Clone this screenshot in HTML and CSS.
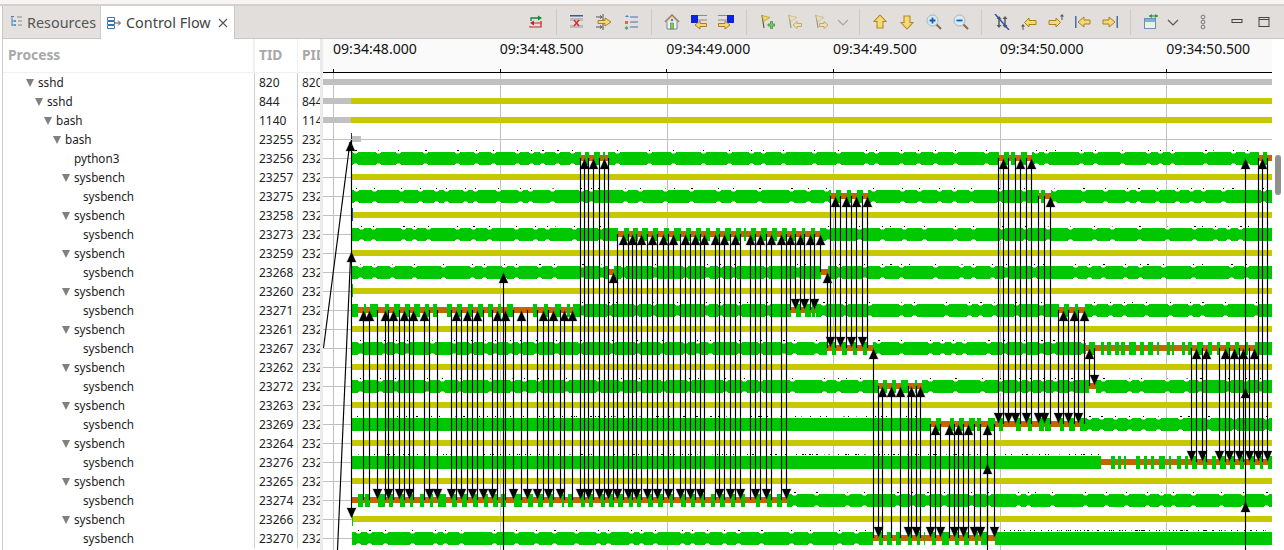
FILE: index.html
```html
<!DOCTYPE html>
<html lang="en">
<head>
<meta charset="utf-8">
<title>Control Flow</title>
<link rel="stylesheet" href="styles.css">
</head>
<body>
<div class="window">
  <div class="topstrip"></div>
  <div class="tabbar">
    <div class="tab">
      <svg class="ico" viewBox="0 0 16 16"><path d="M3 2.500h3M4 3v9M4 7h2M4 11h2" fill="none" stroke="#5b7fa6"/><rect x="6" y="6" width="2" height="2" fill="#5b9bd1"/><rect x="6" y="10" width="2" height="2" fill="#5b9bd1"/><path d="M9 3h5M10 7h4M10 11h4" stroke="#8a8a8a" fill="none"/></svg>
      <span>Resources</span>
    </div>
    <div class="tab active">
      <svg class="ico" viewBox="0 0 16 16"><path d="M1.500 2.500h7v3h-7zM1.500 6.500h7v3h-7zM1.500 10.500h7v3h-7z" fill="none" stroke="#3a76ad"/><path d="M8.500 8h5.500M12 5.500l2.500 2.500-2.500 2.500" fill="none" stroke="#555"/></svg>
      <span>Control Flow</span>
      <svg class="close" viewBox="0 0 10 10"><path d="M1 1l8 8M9 1l-8 8" stroke="#555" stroke-width="1.100"/></svg>
    </div>
    <div class="toolbar">
      <button class="tb"><svg viewBox="0 0 16 16"><path d="M3 7V4h8" fill="none" stroke="#0a8a3a" stroke-width="1.300"/><path d="M10 1.500l4 2.500-4 2.500z" fill="#0a8a3a"/><path d="M13 7v6H2v-1" fill="none" stroke="#d12020" stroke-width="1.200"/><path d="M14 9H5" stroke="#c0504d" stroke-width="1.200"/><path d="M6 6.500L2 9l4 2.500z" fill="#d12020"/></svg></button>
      <i class="sep"></i>
      <button class="tb"><svg viewBox="0 0 16 16"><rect x="1" y="1" width="13" height="1.500" fill="#3d50c0"/><rect x="1" y="4" width="13" height="3" fill="#bdbbb8"/><rect x="1" y="11" width="13" height="3" fill="#bdbbb8"/><path d="M5 6l5 6M10 6l-5 6" stroke="#e02020" stroke-width="1.300"/></svg></button>
      <button class="tb"><svg viewBox="0 0 16 16"><path d="M0 3h5M4 1.500L6 3 4 4.500M0 13h5M4 11.500L6 13l-2 1.500" fill="none" stroke="#555"/><path d="M7 0v6M7 10v6" stroke="#555"/><path d="M2 6.500h7V4l6 4-6 4V9.500H2z" fill="#f6d878" stroke="#a9811c"/></svg></button>
      <button class="tb"><svg viewBox="0 0 16 16"><path d="M2 3l2-2 2 2z" fill="#4a7cc0"/><rect x="2" y="7" width="3" height="3" fill="#e0605a"/><path d="M3.500 12l2 2-2 2-2-2z" fill="#50a878"/><path d="M7 3h8M7 8h8M7 13h8" stroke="#4a6fa5" stroke-width="1.200"/></svg></button>
      <i class="sep"></i>
      <button class="tb"><svg viewBox="0 0 16 16"><path d="M3 7.500V15h10V7.500" fill="#eef2f5" stroke="#6b8aa5"/><path d="M1 8l7-7 7 7" fill="none" stroke="#a2784f" stroke-width="1.500"/><rect x="6.500" y="9" width="3" height="6" fill="#8ec15a" stroke="#4d8a2a" stroke-width=".6"/><rect x="7" y="5" width="2" height="2" fill="#3d7fc0"/></svg></button>
      <button class="tb"><svg viewBox="0 0 16 16"><rect x="0" y="1" width="7" height="8" fill="#0b22e0"/><path d="M7 1.500h9M7 6h9" stroke="#8a8a8a"/><path d="M15.500 9.500H9V7L4 11l5 4v-2.500h6.500z" fill="#f7d878" stroke="#a9811c"/></svg></button>
      <button class="tb"><svg viewBox="0 0 16 16"><rect x="9" y="1" width="7" height="8" fill="#0b22e0"/><path d="M0 1.500h9M0 6h9" stroke="#8a8a8a"/><path d="M.5 9.500H7V7l5 4-5 4v-2.500H.5z" fill="#f7d878" stroke="#a9811c"/></svg></button>
      <i class="sep"></i>
      <button class="tb"><svg viewBox="0 0 16 16"><path d="M3 1l2 13" stroke="#6b5a30" stroke-width="1.200"/><path d="M3 1.500l8 2-6.500 4z" fill="#f0d860" stroke="#b09a30" stroke-width=".7"/><path d="M9 10h2.500V7.500h2V10H16v2h-2.500v2.500h-2V12H9z" fill="#7cc86a" stroke="#3d8a30" stroke-width=".7"/></svg></button>
      <button class="tb"><svg viewBox="0 0 16 16" opacity=".75"><path d="M3 1l2 13" stroke="#8a7f60" stroke-width="1.200"/><path d="M3 1.500l8 2-6.500 4z" fill="#efe3a8" stroke="#b8ab70" stroke-width=".7"/><path d="M15.500 9.500H11V7.500L7 11l4 3.500v-2h4.500z" fill="#f4e2a0" stroke="#b09a50"/></svg></button>
      <button class="tb"><svg viewBox="0 0 16 16" opacity=".75"><path d="M3 1l2 13" stroke="#8a7f60" stroke-width="1.200"/><path d="M3 1.500l8 2-6.500 4z" fill="#efe3a8" stroke="#b8ab70" stroke-width=".7"/><path d="M6.500 9.500H11V7.500l4 3.500-4 3.500v-2H6.500z" fill="#f4e2a0" stroke="#b09a50"/></svg></button>
      <button class="tb chev dim"><svg viewBox="0 0 16 16"><path d="M3 6l5 5 5-5" fill="none" stroke="#a8a6a3" stroke-width="1.200"/></svg></button>
      <i class="sep"></i>
      <button class="tb"><svg viewBox="0 0 16 16"><path d="M8 1l6 6.500h-3V14H5V7.500H2z" fill="#f7d878" stroke="#b08a20" stroke-width="1.100"/></svg></button>
      <button class="tb"><svg viewBox="0 0 16 16"><path d="M8 15L2 8.500h3V2h6v6.500h3z" fill="#f7d878" stroke="#b08a20" stroke-width="1.100"/></svg></button>
      <button class="tb"><svg viewBox="0 0 16 16"><path d="M10 10l5 5" stroke="#8a6a4a" stroke-width="2"/><circle cx="6.500" cy="6.500" r="5.500" fill="#dfe9f2" stroke="#9fb4c6"/><path d="M3.500 6.500h6M6.500 3.500v6" stroke="#0a62b0" stroke-width="1.800"/></svg></button>
      <button class="tb"><svg viewBox="0 0 16 16"><path d="M10 10l5 5" stroke="#8a6a4a" stroke-width="2"/><circle cx="6.500" cy="6.500" r="5.500" fill="#dfe9f2" stroke="#9fb4c6"/><path d="M3.500 6.500h6" stroke="#0a62b0" stroke-width="1.800"/></svg></button>
      <i class="sep"></i>
      <button class="tb"><svg viewBox="0 0 16 16"><path d="M5 2l-2.500 3h5zM11 14l-2.500-3h5zM11 2L8.500 5h5zM5 14l-2.500-3h5z" fill="#5a5a5a"/><path d="M5 4v8M11 4v8" stroke="#5a5a5a" stroke-width="1.500"/><path d="M1 0l14 16" stroke="#2a4fa8" stroke-width="1.400"/></svg></button>
      <button class="tb"><svg viewBox="0 0 16 16"><path d="M8 6.500h7v4H8V13L3.500 8.500 8 4z" fill="#f7d878" stroke="#a9811c"/><path d="M2 11v5" stroke="#555"/><path d="M0 12.500L2 10l2 2.500z" fill="#555"/></svg></button>
      <button class="tb"><svg viewBox="0 0 16 16"><path d="M8 6.500H1v4h7V13l4.500-4.500L8 4z" fill="#f7d878" stroke="#a9811c"/><path d="M14 1v5" stroke="#555"/><path d="M12 2.500L14 0l2 2.500z" fill="#555"/></svg></button>
      <button class="tb"><svg viewBox="0 0 16 16"><rect x="0" y="2" width="1.500" height="12" fill="#4a6fa5"/><path d="M9 6h6v4H9v3L3 8l6-5z" fill="#f7d878" stroke="#a9811c"/></svg></button>
      <button class="tb"><svg viewBox="0 0 16 16"><rect x="14.500" y="2" width="1.500" height="12" fill="#4a6fa5"/><path d="M7 6H1v4h6v3l6-5-6-5z" fill="#f7d878" stroke="#a9811c"/></svg></button>
      <i class="sep"></i>
      <button class="tb"><svg viewBox="0 0 16 16"><rect x="1.500" y="4.500" width="11" height="10" fill="#fff" stroke="#6b8fb5"/><rect x="2" y="5" width="10" height="3" fill="#7fb0dc"/><rect x="2" y="8" width="10" height="6" fill="#eaf2e0"/><path d="M6 2h9" stroke="#2a9a3a" stroke-width="1.200"/><path d="M9 0L6 2l3 2zM12 0l3 2-3 2z" fill="#2a9a3a"/></svg></button>
      <button class="tb chev"><svg viewBox="0 0 16 16"><path d="M3 6l5 5 5-5" fill="none" stroke="#555" stroke-width="1.200"/></svg></button>
      <button class="tb dots"><svg viewBox="0 0 16 16"><circle cx="8" cy="3" r="1.900" fill="none" stroke="#777"/><circle cx="8" cy="8" r="1.900" fill="none" stroke="#777"/><circle cx="8" cy="13" r="1.900" fill="none" stroke="#777"/></svg></button>
      <button class="tb mini"><svg viewBox="0 0 16 16"><rect x="3" y="5.500" width="10" height="3" fill="none" stroke="#444"/></svg></button>
      <button class="tb"><svg viewBox="0 0 16 16"><rect x="3" y="3.500" width="10" height="9" fill="none" stroke="#444"/><path d="M3 5.500h10" stroke="#444"/></svg></button>
    </div>
  </div>
  <div class="content">
    <div class="table">
      <div class="row head"><div class="c name">Process</div><div class="c tid">TID</div><div class="c pid">PID</div></div>
      <div class="row"><div class="c name d0 tw">sshd</div><div class="c tid">820</div><div class="c pid">820</div></div>
      <div class="row"><div class="c name d1 tw">sshd</div><div class="c tid">844</div><div class="c pid">844</div></div>
      <div class="row"><div class="c name d2 tw">bash</div><div class="c tid">1140</div><div class="c pid">1140</div></div>
      <div class="row"><div class="c name d3 tw">bash</div><div class="c tid">23255</div><div class="c pid">23255</div></div>
      <div class="row"><div class="c name d4">python3</div><div class="c tid">23256</div><div class="c pid">23256</div></div>
      <div class="row"><div class="c name d4 tw">sysbench</div><div class="c tid">23257</div><div class="c pid">23257</div></div>
      <div class="row"><div class="c name d5">sysbench</div><div class="c tid">23275</div><div class="c pid">23257</div></div>
      <div class="row"><div class="c name d4 tw">sysbench</div><div class="c tid">23258</div><div class="c pid">23258</div></div>
      <div class="row"><div class="c name d5">sysbench</div><div class="c tid">23273</div><div class="c pid">23258</div></div>
      <div class="row"><div class="c name d4 tw">sysbench</div><div class="c tid">23259</div><div class="c pid">23259</div></div>
      <div class="row"><div class="c name d5">sysbench</div><div class="c tid">23268</div><div class="c pid">23259</div></div>
      <div class="row"><div class="c name d4 tw">sysbench</div><div class="c tid">23260</div><div class="c pid">23260</div></div>
      <div class="row"><div class="c name d5">sysbench</div><div class="c tid">23271</div><div class="c pid">23260</div></div>
      <div class="row"><div class="c name d4 tw">sysbench</div><div class="c tid">23261</div><div class="c pid">23261</div></div>
      <div class="row"><div class="c name d5">sysbench</div><div class="c tid">23267</div><div class="c pid">23261</div></div>
      <div class="row"><div class="c name d4 tw">sysbench</div><div class="c tid">23262</div><div class="c pid">23262</div></div>
      <div class="row"><div class="c name d5">sysbench</div><div class="c tid">23272</div><div class="c pid">23262</div></div>
      <div class="row"><div class="c name d4 tw">sysbench</div><div class="c tid">23263</div><div class="c pid">23263</div></div>
      <div class="row"><div class="c name d5">sysbench</div><div class="c tid">23269</div><div class="c pid">23263</div></div>
      <div class="row"><div class="c name d4 tw">sysbench</div><div class="c tid">23264</div><div class="c pid">23264</div></div>
      <div class="row"><div class="c name d5">sysbench</div><div class="c tid">23276</div><div class="c pid">23264</div></div>
      <div class="row"><div class="c name d4 tw">sysbench</div><div class="c tid">23265</div><div class="c pid">23265</div></div>
      <div class="row"><div class="c name d5">sysbench</div><div class="c tid">23274</div><div class="c pid">23265</div></div>
      <div class="row"><div class="c name d4 tw">sysbench</div><div class="c tid">23266</div><div class="c pid">23266</div></div>
      <div class="row"><div class="c name d5">sysbench</div><div class="c tid">23270</div><div class="c pid">23266</div></div>
    </div>
    <div class="sash"></div>
    <div class="chart">
      <div class="scale">
        <div class="mark">09:34:48.000</div>
        <div class="mark">09:34:48.500</div>
        <div class="mark">09:34:49.000</div>
        <div class="mark">09:34:49.500</div>
        <div class="mark">09:34:50.000</div>
        <div class="mark">09:34:50.500</div>
      </div>
      <div class="plot" id="plot"></div>
    </div>
    <div class="vscroll"><div class="thumb"></div></div>
  </div>
</div>
<script src="timeline.js"></script>
</body>
</html>
```
FILE: styles.css
```css
* { box-sizing: border-box; }
html, body { margin: 0; height: 100%; background: #fff; overflow: hidden; }
body { font-family: "Noto Sans", "Open Sans", sans-serif; font-size: 12px; color: #222; }
.window { width: 1284px; height: 550px; display: flex; flex-direction: column; overflow: hidden; }
.topstrip { height: 6px; background: #f6f5f4; border-bottom: 2px solid #d3d0cd; flex: none; }
.tabbar { height: 33px; flex: none; display: flex; background: #e1dedb; border-bottom: 1px solid #c9c6c3; margin-left: 2px; border-left: 1px solid #c9c6c3; }
.tab { width: 98px; display: flex; align-items: center; gap: 3px; padding-left: 5px; font-size: 14.4px; color: #555; background: #e4e1de; border-right: 1px solid #cfccc9; }
.tab.active { width: 134px; background: #fff; color: #444; gap: 4px; padding-left: 5px; border-right: 1px solid #c9c6c3; margin-bottom: -1px; }
.ico { width: 16px; height: 16px; flex: none; }
.close { width: 10px; height: 10px; margin-left: 3px; flex: none; }
.toolbar { margin-left: auto; display: flex; align-items: center; padding-right: 6.5px; }
.tb { width: 27px; height: 32px; padding: 0; border: 0; background: none; display: flex; align-items: center; justify-content: center; flex: none; }
.tb svg { width: 16px; height: 16px; display: block; }
.tb.chev { width: 17px; }
.tb.dim { margin-right: 1px; }
.tb.dots { margin-left: 8px; }
.tb.mini { margin-left: 7px; }
.sep { width: 1px; height: 26px; background: #cdcac7; flex: none; margin: 0 7px 0 6px; }
.content { flex: 1; display: flex; min-height: 0; }
.table { width: 318px; flex: none; border-left: 1px solid #cfccc9; margin-left: 2px; }
.row { display: flex; height: 19px; line-height: 19px; }
.row.head { height: 34px; line-height: 31px; border-bottom: 1px solid #f0f0f0; font-weight: 700; font-size: 13.8px; color: #a8a8a8; }
.c { overflow: hidden; white-space: nowrap; flex: none; }
.name { width: 251px; padding-left: 5px; position: relative; border-right: 1px solid #f0f0f0; font-size: 11.7px; }
.head .name { font-size: 13.8px; }
.row:not(.head) .name { border-right: 0; }
.tid { width: 43px; padding-left: 4px; border-left: 1px solid #cfcfcf; }
.pid { width: 24px; padding-left: 4px; border-left: 1px solid #cfcfcf; }
.head .tid, .head .pid { border-left-color: #f0f0f0; }
.d0 { padding-left: 35px; } .d1 { padding-left: 44px; } .d2 { padding-left: 53px; }
.d3 { padding-left: 62px; } .d4 { padding-left: 71px; } .d5 { padding-left: 80px; }
.tw::before { content: ""; display: inline-block; width: 0; height: 0; border-left: 4px solid transparent; border-right: 4px solid transparent; border-top: 8px solid #808080; margin-left: -12px; margin-right: 4px; vertical-align: 0; }
.sash { width: 3px; background: #ebebeb; flex: none; }
.chart { width: 949px; flex: none; display: flex; flex-direction: column; }
.scale { height: 34px; flex: none; background: #fafafa; display: flex; padding-left: 10px; border-bottom: 1px solid #000; }
.mark { flex: 0 0 166.67px; height: 33px; position: relative; font-size: 14.1px; line-height: 19px; color: #111; }
.mark::after { content: ""; position: absolute; left: 0; bottom: 0; width: 1px; height: 3px; background: #000; }
.plot { flex: 1; min-height: 0; overflow: hidden; }
.plot svg { display: block; }
.vscroll { flex: 1; padding: 116px 3px 0; }
.thumb { width: 6px; height: 40px; border-radius: 3px; background: #8f8f8f; }
```
FILE: timeline.js
```js
(function () {
  var NS = "http://www.w3.org/2000/svg";
  var svg = document.createElementNS(NS, "svg");
  svg.setAttribute("width", 949);
  svg.setAttribute("height", 477);
  svg.setAttribute("viewBox", "323 73 949 477");
  var L = 352, R = 1272;
  var GREEN = "#00c800", YEL = "#c8c800", ORG = "#c86400", GRAY = "#c0c0c0";
  var seed = 12345;
  function rnd() { seed = (seed * 1664525 + 1013904223) >>> 0; return seed / 4294967296; }
  function el(n, a) { var e = document.createElementNS(NS, n); for (var k in a) e.setAttribute(k, a[k]); svg.appendChild(e); return e; }
  function rect(x, y, w, h, f) { el("rect", { x: x, y: y, width: w, height: h, fill: f, "shape-rendering": "crispEdges" }); }
  function cy(i) { return 82 + 19 * i; }

  var i;
  for (i = 0; i < 25; i++) rect(323, cy(i), 949, 1, GRAY);
  [333, 500, 667, 833, 1000, 1166].forEach(function (x) { rect(x, 73, 1, 477, GRAY); });

  rect(323, 79, 949, 6, GRAY);
  rect(323, 98, 28, 6, GRAY); rect(351, 98, 921, 6, YEL);
  rect(323, 117, 28, 6, GRAY); rect(351, 117, 921, 6, YEL);
  rect(351, 136, 10, 6, GRAY);
  rect(351, 133, 1, 6, "#2020c0");

  for (i = 5; i < 24; i += 2) rect(352, cy(i) - 3, 920, 6, YEL);

  /* green rows: regions where the thread is mostly on the wait state, with its short running stubs */
  var regions = {
    4: [[581, 608, [585, 589, 594, 600, 603, 605]], [999, 1032, [1004, 1009, 1011, 1015, 1021, 1027]], [1259, 1272, [1263, 1267]]],
    6: [[831, 868, [836, 841, 847, 851, 857, 863]], [1039, 1051, [1041, 1045]]],
    8: [[618, 820, [624, 629, 633, 638, 642, 648, 653, 658, 664, 669, 674, 681, 686, 691, 696, 701, 706, 710, 716, 720, 725, 731, 736, 741, 744, 746, 751, 756, 761, 767, 772, 777, 782, 787, 792, 796, 802, 805, 811, 815]]],
    10: [[609, 614, []], [821, 828, []]],
    12: [[352, 573, [352, 358, 364, 366, 370, 378, 385, 389, 394, 400, 405, 410, 414, 420, 425, 429, 433, 437, 447, 452, 457, 462, 468, 473, 478, 483, 488, 493, 498, 501, 507, 513, 533, 537, 544, 548, 555, 561, 567, 570]], [791, 816, [796, 801, 805, 811, 812, 815]], [1059, 1085, [1064, 1069, 1075, 1078]]],
    14: [[827, 873, [832, 836, 842, 847, 853, 857, 863, 867]], [1086, 1272, [1089, 1095, 1101, 1104, 1107, 1111, 1115, 1119, 1121, 1125, 1129, 1136, 1140, 1144, 1148, 1153, 1157, 1159, 1167, 1170, 1172, 1174, 1182, 1185, 1188, 1192, 1197, 1203, 1208, 1212, 1217, 1220, 1226, 1230, 1235, 1239, 1245, 1248, 1255, 1272]]],
    16: [[878, 922, [883, 887, 892, 896, 901, 908, 915, 917]], [1089, 1096, []]],
    18: [[924, 1080, [924, 931, 936, 941, 950, 954, 959, 964, 969, 975, 977, 981, 988, 995, 999, 1003, 1016, 1021, 1028, 1032, 1039, 1044, 1045, 1051, 1060, 1064, 1069, 1075]]],
    20: [[1101, 1272, [1111, 1115, 1118, 1121, 1124, 1126, 1136, 1140, 1144, 1147, 1151, 1154, 1159, 1165, 1169, 1171, 1177, 1181, 1185, 1188, 1192, 1197, 1203, 1207, 1212, 1216, 1220, 1226, 1230, 1235, 1240, 1244, 1250, 1255, 1260, 1263, 1268, 1272]]],
    22: [[352, 787, [358, 363, 365, 370, 378, 385, 389, 393, 400, 405, 410, 413, 420, 424, 430, 433, 438, 446, 452, 457, 462, 467, 473, 478, 484, 488, 493, 498, 501, 506, 514, 522, 528, 533, 538, 543, 549, 553, 562, 564, 568, 573, 581, 585, 589, 593, 601, 605, 609, 614, 618, 623, 629, 633, 637, 641, 648, 653, 658, 663, 670, 673, 681, 686, 691, 695, 701, 705, 711, 715, 720, 725, 731, 735, 741, 745, 756, 760, 767, 772, 777, 782]]],
    24: [[873, 995, [879, 883, 887, 892, 896, 901, 908, 912, 917, 920, 924, 925, 932, 936, 942, 949, 955, 959, 964, 969, 975, 978, 981, 987]]]
  };
  /* spacing of the small state marks above a green run: [from, to, average gap] */
  var dense = { 20: [[352, 1100, 6]], 24: [[995, 1272, 4]], 18: [[352, 924, 9]] };

  function gapAt(r, x) {
    var d = dense[r] || [];
    for (var k = 0; k < d.length; k++) if (x >= d[k][0] && x < d[k][1]) return d[k][2];
    return 16;
  }

  function run(r, a, b) {
    var c = cy(r);
    rect(a, c - 6, b - a, 13, GREEN);
    var x = a + 3 + rnd() * 8, last = a - 20;
    while (x < b - 2) {
      var px = Math.round(x), g = gapAt(r, px);
      rect(px, c - 8, rnd() < 0.2 ? 2 : 1, 1, rnd() < 0.12 ? "#888" : "#000");
      if (g > 9 && px - last > 9) {
        rect(px - 2, c - 6, 5, 1, "#fff");
        rect(px - 2, c + 6, 5, 1, "#fff");
        rect(px - 1, c - 5, 3, 1, "#7fe37f");
        rect(px - 1, c + 5, 3, 1, "#7fe37f");
        last = px;
      }
      x += g * (0.25 + rnd() * 1.6) + (g > 9 ? 3 : 0);
    }
  }

  for (i = 4; i <= 24; i += 2) {
    var c = cy(i), reg = regions[i] || [], pos = L;
    reg.forEach(function (rg) {
      if (rg[0] > pos) run(i, pos, rg[0]);
      rect(rg[0], c - 3, rg[1] - rg[0], 6, ORG);
      var s = rg[2];
      for (var k = 0; k < s.length; k += 2) rect(s[k], c - 6, s[k + 1] - s[k], 13, GREEN);
      pos = rg[1];
    });
    if (pos < R) run(i, pos, R);
  }
  rect(351, 174, 1, 6, GREEN);
  rect(351, 208, 2, 13, "#0a50d0");
  rect(351, 284, 2, 13, GREEN);
  rect(352, 510, 1, 16, GREEN);

  function line(x1, y1, x2, y2) {
    el("line", { x1: x1 + 0.5, y1: y1, x2: x2 + 0.5, y2: y2, stroke: "#000", "stroke-width": 1.15 });
  }
  function head(x, tip, dir) {
    var b = tip + dir * 10, X = x + 0.5;
    el("polygon", { points: X + "," + tip + " " + (X - 4.5) + "," + b + " " + (X + 4.5) + "," + b, fill: "#000", stroke: "#000", "stroke-opacity": 0.22, "stroke-width": 1.2 });
  }
  function up(list, to, from) {
    list.forEach(function (x) {
      var a = cy(to) + 1, f = from > 30 ? from : cy(from);
      line(x, a + 3, x, f); head(x, a, 1);
    });
  }
  function down(list, from, to) {
    list.forEach(function (x) {
      var a = cy(to) - 1;
      line(x, cy(from), x, a - 3); head(x, a, -1);
    });
  }

  up([363, 369, 385, 393, 404, 413, 424, 456, 467, 477, 497, 505, 521, 543, 553, 564, 572], 12, 22);
  down([377, 388, 399, 409, 429, 437, 451, 461, 472, 483, 492, 513, 527, 537, 548, 560], 12, 22);
  down([580, 588, 599, 608], 4, 22);
  up([584, 593, 604], 4, 22);
  up([623, 632, 641, 652, 663, 673, 685, 695, 704, 715, 724, 735, 750, 760, 771, 781], 8, 22);
  down([617, 628, 636, 647, 657, 668, 680, 690, 700, 719, 730, 740, 755, 766, 786], 8, 22);
  down([795, 804, 814], 8, 12);
  up([790, 800, 810], 8, 12);
  up([820], 8, 10);
  up([613], 10, 22);
  up([503], 10, 550);
  up([827], 10, 14);
  up([835, 846, 856, 867], 6, 14);
  down([830, 840, 851, 862], 6, 14);
  up([873], 14, 24);
  up([882, 891, 900, 911, 920], 16, 24);
  down([878, 908, 916], 16, 24);
  up([935, 949, 958, 968, 987], 18, 24);
  down([930, 940, 954, 963, 974, 980, 994], 18, 24);
  line(987, 470, 987, 550); head(987, 464, 1);
  down([998, 1008, 1015, 1026], 4, 18);
  up([1003, 1020, 1031], 4, 18);
  down([1038, 1044], 6, 18);
  up([1050], 6, 18);
  down([1058, 1068, 1078], 12, 18);
  up([1063, 1074, 1084], 12, 18);
  up([1089], 14, 16);
  down([1094], 14, 16);
  up([1196, 1206, 1225, 1234, 1243, 1254], 14, 20);
  down([1191, 1202, 1219, 1229, 1239, 1249], 14, 20);
  down([1258, 1267], 4, 20);
  up([1262], 4, 20);
  up([1245], 4, 550);
  head(1245, 388, 1); head(1245, 502, 1);

  /* the long links that leave the left edge */
  line(323, 348, 349.5, 142); head(350, 141, 1);
  line(337, 550, 350, 258); head(351, 252, 1);
  line(351, 140, 351, 512); head(351, 518, -1);

  document.getElementById("plot").appendChild(svg);
})();
```
